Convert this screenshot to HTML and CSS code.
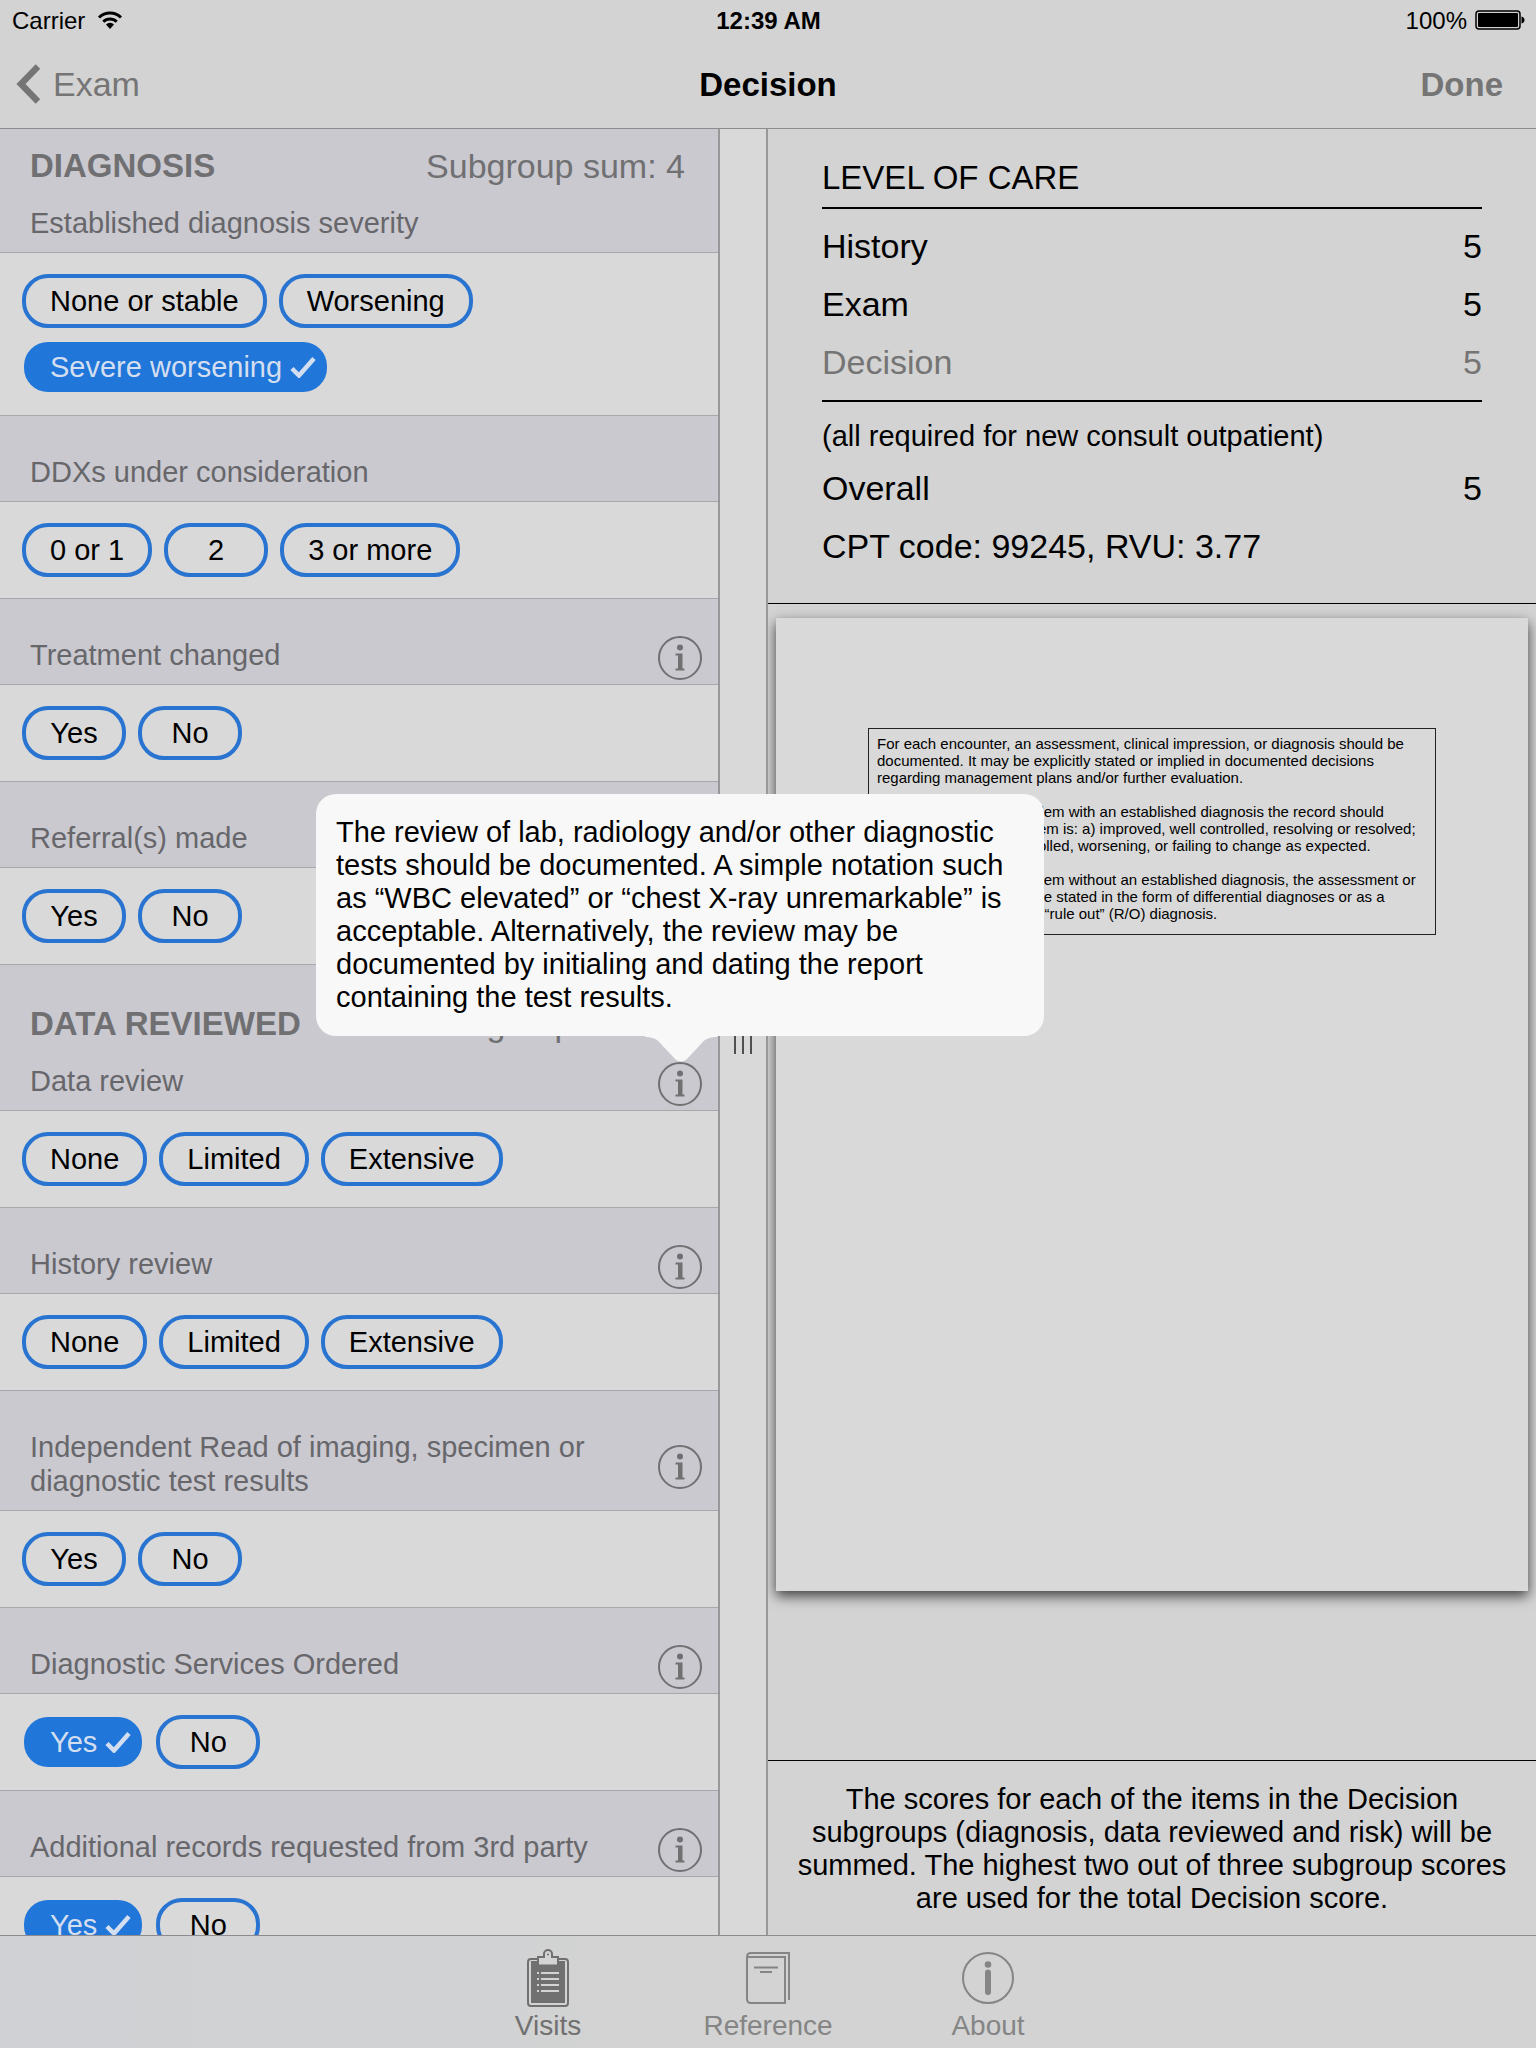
FILE: index.html
```html
<!DOCTYPE html>
<html lang="en">
<head>
  <meta charset="UTF-8" />
  <meta name="viewport" content="width=device-width, initial-scale=1.0"/>
  <title>Decision</title>
  <link rel="stylesheet" href="styles.css">
</head>
<body>
  <!-- shared icons -->
  <svg class="sprite" aria-hidden="true">
    <symbol id="info" viewBox="0 0 44 44">
      <circle cx="22" cy="22" r="21" fill="none" stroke="currentColor" stroke-width="2"/>
      <circle cx="22" cy="11.500" r="3" fill="currentColor"/>
      <path d="M17.500 17.500h7V32.500h2V34.500h-9v-2h2.500V19.500h-2.500z" fill="currentColor"/>
    </symbol>
    <symbol id="check" viewBox="0 0 26 22">
      <path d="M2 12.500l7 7L24 2.500" fill="none" stroke="currentColor" stroke-width="4.500"/>
    </symbol>
  </svg>

  <header class="top">
    <div class="status">
      <span class="carrier">Carrier
        <svg width="26" height="20" viewBox="0 0 26 20">
          <path d="M2 7.500a15.500 15.500 0 0 1 22 0M6.300 11.800a9.500 9.500 0 0 1 13.400 0" fill="none" stroke="#000" stroke-width="3"/>
          <path d="M9 14.500a5.700 5.700 0 0 1 8 0l-4 4.500z"/>
        </svg>
      </span>
      <b>12:39 AM</b>
      <span class="battery">100%
        <svg width="50" height="20" viewBox="0 0 50 20">
          <rect x="1" y="1" width="44" height="18" rx="3" fill="none" stroke="#000" stroke-width="1.500"/>
          <rect x="3" y="3" width="40" height="14" rx="1"/>
          <path d="M46.500 6.500q3 1 3 3.500t-3 3.500z"/>
        </svg>
      </span>
    </div>
    <div class="navbar">
      <button class="back">
        <svg width="24" height="40" viewBox="0 0 24 40"><path d="M22 2.500L5 20l17 17.500" fill="none" stroke="currentColor" stroke-width="6.500"/></svg>
        Exam
      </button>
      <h1>Decision</h1>
      <button class="done">Done</button>
    </div>
  </header>

  <main class="workspace">
    <div class="questions">
      <section>
        <div class="head head-first">
          <div class="group"><h2>DIAGNOSIS</h2><span>Subgroup sum: 4</span></div>
          <div class="label"><h3>Established diagnosis severity</h3></div>
        </div>
        <div class="chips">
          <button class="chip">None or stable</button>
          <button class="chip">Worsening</button>
          <button class="chip on" aria-pressed="true">Severe worsening <svg><use href="#check"/></svg></button>
        </div>
      </section>
      <section>
        <div class="head"><div class="label"><h3>DDXs under consideration</h3></div></div>
        <div class="chips">
          <button class="chip">0 or 1</button>
          <button class="chip">2</button>
          <button class="chip">3 or more</button>
        </div>
      </section>
      <section>
        <div class="head"><div class="label"><h3>Treatment changed</h3><button class="info" aria-label="Info"><svg><use href="#info"/></svg></button></div></div>
        <div class="chips">
          <button class="chip">Yes</button>
          <button class="chip">No</button>
        </div>
      </section>
      <section>
        <div class="head"><div class="label"><h3>Referral(s) made</h3></div></div>
        <div class="chips">
          <button class="chip">Yes</button>
          <button class="chip">No</button>
        </div>
      </section>
      <section>
        <div class="head">
          <div class="group"><h2>DATA REVIEWED</h2><span>Subgroup sum: 4</span></div>
          <div class="label"><h3>Data review</h3><button class="info" aria-label="Info"><svg><use href="#info"/></svg></button></div>
        </div>
        <div class="chips">
          <button class="chip">None</button>
          <button class="chip">Limited</button>
          <button class="chip">Extensive</button>
        </div>
      </section>
      <section>
        <div class="head"><div class="label"><h3>History review</h3><button class="info" aria-label="Info"><svg><use href="#info"/></svg></button></div></div>
        <div class="chips">
          <button class="chip">None</button>
          <button class="chip">Limited</button>
          <button class="chip">Extensive</button>
        </div>
      </section>
      <section>
        <div class="head"><div class="label"><h3>Independent Read of imaging, specimen or diagnostic test results</h3><button class="info" aria-label="Info"><svg><use href="#info"/></svg></button></div></div>
        <div class="chips">
          <button class="chip">Yes</button>
          <button class="chip">No</button>
        </div>
      </section>
      <section>
        <div class="head"><div class="label"><h3>Diagnostic Services Ordered</h3><button class="info" aria-label="Info"><svg><use href="#info"/></svg></button></div></div>
        <div class="chips">
          <button class="chip on" aria-pressed="true">Yes <svg><use href="#check"/></svg></button>
          <button class="chip">No</button>
        </div>
      </section>
      <section>
        <div class="head"><div class="label"><h3>Additional records requested from 3rd party</h3><button class="info" aria-label="Info"><svg><use href="#info"/></svg></button></div></div>
        <div class="chips">
          <button class="chip on" aria-pressed="true">Yes <svg><use href="#check"/></svg></button>
          <button class="chip">No</button>
        </div>
      </section>
    </div>

    <div class="divider"><div class="grip"></div></div>

    <div class="summary">
      <section class="care">
        <h2>LEVEL OF CARE</h2>
        <table class="scores">
          <tbody>
            <tr><th scope="row">History</th><td>5</td></tr>
            <tr><th scope="row">Exam</th><td>5</td></tr>
            <tr class="current"><th scope="row">Decision</th><td>5</td></tr>
          </tbody>
        </table>
        <p class="note">(all required for new consult outpatient)</p>
        <p class="total"><span>Overall</span><span>5</span></p>
        <p class="total">CPT code: 99245, RVU: 3.77</p>
      </section>

      <section class="preview">
        <div class="paper">
          <div class="guide">
            <p>For each encounter, an assessment, clinical impression, or diagnosis should be<br>documented. It may be explicitly stated or implied in documented decisions<br>regarding management plans and/or further evaluation.</p>
            <p><span class="dot">•</span>For a presenting problem with an established diagnosis the record should<br>reflect whether the problem is: a) improved, well controlled, resolving or resolved;<br>or, b) inadequately controlled, worsening, or failing to change as expected.</p>
            <p><span class="dot">•</span>For a presenting problem without an established diagnosis, the assessment or<br>clinical impression may be stated in the form of differential diagnoses or as a<br>“possible”, “probable”, or “rule out” (R/O) diagnosis.</p>
          </div>
        </div>
      </section>

      <p class="explain">The scores for each of the items in the Decision subgroups (diagnosis, data reviewed and risk) will be summed. The highest two out of three subgroup scores are used for the total Decision score.</p>
    </div>

    <div class="popover" role="tooltip">
      The review of lab, radiology and/or other diagnostic tests should be documented. A simple notation such as “WBC elevated” or “chest X-ray unremarkable” is acceptable. Alternatively, the review may be documented by initialing and dating the report containing the test results.
      <svg class="arrow" width="72" height="27" viewBox="0 0 72 27"><path d="M0 0h72v1c-8 0-12 2-16 7L42 23q-6 5-12 0L16 8C12 3 8 1 0 1z"/></svg>
    </div>
  </main>

  <nav class="tabs">
    <a href="#visits" class="tab active">
      <svg width="42" height="58" viewBox="0 0 42 58" fill="none" stroke="currentColor" stroke-width="2">
        <rect x="1" y="10" width="40" height="47" rx="3"/>
        <path d="M4 12h34v42H4z" fill="currentColor" stroke="none"/>
        <path d="M11 15V8h6V5a4 4 0 0 1 8 0v3h6v7z" fill="#d3d3d3"/>
        <path d="M12 14h18" stroke="#d3d3d3" stroke-width="3"/>
        <circle cx="21" cy="5.500" r="1" fill="currentColor" stroke="none"/>
        <path d="M10 24h2M14 24h18M10 30h2M14 30h18M10 36h2M14 36h18M10 42h2M14 42h18" stroke="#d3d3d3"/>
      </svg>
      Visits
    </a>
    <a href="#reference" class="tab">
      <svg width="44" height="52" viewBox="0 0 44 52" fill="none" stroke="currentColor" stroke-width="2">
        <path d="M1 5v42q0 4 4 4h34V5H1q0-4 4-4h38v47"/>
        <path d="M8 15.500h24M14 20h12"/>
      </svg>
      Reference
    </a>
    <a href="#about" class="tab">
      <svg width="52" height="52" viewBox="0 0 52 52">
        <circle cx="26" cy="26" r="25" fill="none" stroke="currentColor" stroke-width="2"/>
        <circle cx="26" cy="12.500" r="3.300" fill="currentColor"/>
        <path d="M26 20.500v19.500" stroke="currentColor" stroke-width="6" stroke-linecap="round"/>
      </svg>
      About
    </a>
  </nav>
</body>
</html>
```

FILE: styles.css
```css
* {
  box-sizing: border-box;
}

body {
  margin: 0;
  height: 100vh;
  display: flex;
  flex-direction: column;
  font-family: "Liberation Sans", Arial, sans-serif;
  font-size: 29px;
  line-height: 33px;
  color: #000;
  background-color: #d3d3d3;
}

h1, h2, h3, p {
  margin: 0;
  font-weight: normal;
}

button {
  font: inherit;
  color: inherit;
  background: none;
  border: none;
  padding: 0;
  cursor: pointer;
}

.sprite {
  position: absolute;
  width: 0;
  height: 0;
}

/* top bars */
.top {
  border-bottom: 1px solid #8c8c90;
}

.status, .navbar {
  display: grid;
  grid-template-columns: 1fr auto 1fr;
  align-items: center;
}

.status {
  height: 40px;
  padding: 0 11px 0 12px;
  font-size: 24px;
}

.carrier, .battery {
  display: flex;
  align-items: center;
  gap: 12px;
}

.battery {
  justify-content: flex-end;
  gap: 8px;
}

.navbar {
  height: 88px;
  padding: 0 16px;
  font-size: 34px;
}

.navbar h1, .done {
  font-size: 33px;
  font-weight: bold;
}

.back {
  display: flex;
  align-items: center;
  gap: 13px;
  color: #757575;
}

.done {
  justify-self: end;
  padding-right: 17px;
  color: #757575;
}

.workspace {
  position: relative;
  flex: 1;
  min-height: 0;
  display: grid;
  grid-template-columns: minmax(0, 15fr) 48px minmax(0, 16fr);
  grid-template-rows: minmax(0, 1fr);
}

/* question list */
.questions {
  overflow: hidden;
  background-color: #d9d9d9;
  border-right: 2px solid #98989a;
}

.head {
  padding: 39px 16px 12px 30px;
  background-color: #cac9cf;
  border-top: 1px solid #a8a8ac;
  border-bottom: 1px solid #a8a8ac;
  color: #67676b;
}

.head-first {
  padding-top: 17px;
  border-top: none;
}

.group {
  display: flex;
  justify-content: space-between;
  align-items: center;
  margin-bottom: 20px;
  padding-right: 17px;
  font-size: 34px;
  line-height: 40px;
  color: #707073;
}

.group h2 {
  font-size: 33px;
  font-weight: bold;
}

.label {
  display: flex;
  align-items: center;
  justify-content: space-between;
  line-height: 34px;
}

.label h3 {
  max-width: 600px;
  font-size: 29px;
}

/* circle hangs a little lower than the text line */
.info {
  width: 44px;
  height: 44px;
  flex: none;
  margin: -3px 0 -9px;
  color: #707073;
}

.info svg {
  display: block;
  width: 44px;
  height: 44px;
}

.chips {
  display: flex;
  flex-wrap: wrap;
  gap: 12px;
  padding: 21px 22px;
}

.chip {
  min-width: 104px;
  height: 54px;
  padding: 0 24px;
  border: 4px solid #2874d0;
  border-radius: 26px;
}

.chip.on {
  display: flex;
  align-items: center;
  gap: 8px;
  padding: 0 11px 0 26px;
  border: 2px solid transparent;
  background: #2176d9 padding-box;
  color: #d3dff0;
}

.chip svg {
  width: 26px;
  height: 22px;
}

.divider {
  display: flex;
  align-items: center;
  justify-content: center;
  background-color: #d9d9d9;
  border-right: 2px solid #98989a;
}

.grip {
  width: 18px;
  height: 44px;
  background: repeating-linear-gradient(to right, #505050 0 2px, transparent 2px 8px);
}

/* level of care */
.summary {
  display: flex;
  flex-direction: column;
}

.care {
  padding: 20px 54px 28px;
  border-bottom: 1px solid #000;
  font-size: 34px;
  line-height: 58px;
}

.care h2 {
  font-size: 33px;
}

.scores {
  width: 100%;
  border-collapse: separate;
  border-spacing: 0;
  padding: 8px 0 9px;
  border-top: 2px solid #000;
  border-bottom: 2px solid #000;
}

.scores th, .scores td {
  padding: 0;
  text-align: left;
  font-weight: normal;
}

.scores td {
  text-align: right;
}

.current {
  color: #757575;
}

.note {
  margin: 15px 0 4px;
  font-size: 29px;
  line-height: 38px;
}

.total {
  display: flex;
  justify-content: space-between;
}

.preview {
  flex: 1;
  min-height: 0;
  padding: 14px 8px;
  overflow: hidden;
}

.paper {
  aspect-ratio: 17 / 22;
  padding: 110px 92px;
  background-color: #d9d9d9;
  box-shadow: 0 5px 12px rgba(0, 0, 0, 0.7);
}

.guide {
  padding: 6px 8px 12px;
  border: 1px solid #222;
  font-size: 15px;
  line-height: 17px;
  white-space: nowrap;
}

.guide p + p {
  margin-top: 17px;
}

.dot {
  display: inline-block;
  width: 20px;
}

.explain {
  padding: 22px 24px 20px;
  border-top: 1px solid #000;
  text-align: center;
}

.popover {
  position: absolute;
  top: 665px;
  left: 316px;
  width: 728px;
  padding: 22px 20px;
  border-radius: 20px;
  background-color: #f8f8f8;
}

.arrow {
  position: absolute;
  top: 100%;
  left: 329px;
  fill: #f8f8f8;
}

/* bottom tabs */
.tabs {
  height: 113px;
  display: flex;
  justify-content: center;
  border-top: 1px solid #8c8c90;
  background: linear-gradient(to right, #cfd1d4, #d3d3d3 50%);
}

.tab {
  width: 220px;
  display: flex;
  flex-direction: column;
  align-items: center;
  justify-content: flex-end;
  gap: 2px;
  padding-bottom: 6px;
  font-size: 28px;
  color: #858585;
  text-decoration: none;
}

.tab:not(.active) {
  gap: 5px;
}

.active {
  color: #707070;
}
```
